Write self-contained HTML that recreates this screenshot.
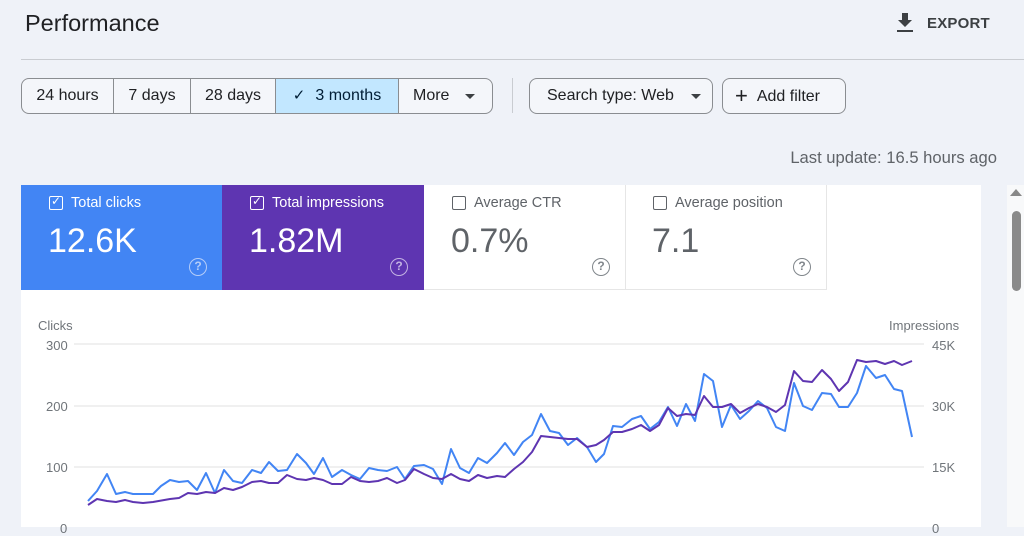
<!DOCTYPE html>
<html><head><meta charset="utf-8"><style>
*{margin:0;padding:0;box-sizing:border-box}
body{width:1024px;height:527px;overflow:hidden;background:#eff2f8;font-family:"Liberation Sans",Arial,sans-serif;position:relative;color:#3c4043}
.a{position:absolute}
.seg{position:absolute;top:78px;height:36px;border:1px solid #8a8d91;font-size:16px;color:#202124;line-height:34px;text-align:center;background:#f4f6fa}
.card{position:absolute;top:185px;height:105px;width:202px}
.lbl{position:absolute;left:28px;top:10px;font-size:14.5px;display:flex;align-items:center}
.cb{width:14px;height:14px;border:1.6px solid currentColor;border-radius:2px;margin-right:8px;position:relative}
.val{position:absolute;left:27px;top:37px;font-size:34px}
.q{position:absolute;left:168px;top:73px;width:18px;height:18px;border:1.5px solid currentColor;border-radius:50%;font-size:12px;text-align:center;line-height:15px;font-weight:bold}
.ax{position:absolute;font-size:13px;color:#70757a}
</style></head><body>
<div class="a" style="left:25px;top:10px;font-size:23.5px;color:#202124">Performance</div>
<svg class="a" style="left:896px;top:13px" width="18" height="20" viewBox="0 0 18 20"><path d="M6 0h6v7h4l-7 7-7-7h4z" fill="#3c4043"/><rect x="1" y="17" width="16" height="2" fill="#3c4043"/></svg>
<div class="a" style="left:927px;top:15px;font-size:15px;font-weight:bold;color:#3c4043;letter-spacing:.2px">EXPORT</div>
<div class="a" style="left:21px;top:59px;width:1003px;height:1px;background:#c9ccd1"></div>

<div class="seg" style="left:21px;width:93px;border-radius:8px 0 0 8px">24 hours</div>
<div class="seg" style="left:113px;width:78px">7 days</div>
<div class="seg" style="left:190px;width:86px">28 days</div>
<div class="seg" style="left:275px;width:124px;background:#c2e7ff;color:#001d35"><span style="font-size:15px;margin-right:10px">✓</span>3 months</div>
<div class="seg" style="left:398px;width:95px;border-radius:0 8px 8px 0;text-align:left;padding-left:14px">More<span style="position:absolute;left:66px;top:15px;border:5px solid transparent;border-top-color:#3c4043;border-bottom:0"></span></div>
<div class="a" style="left:512px;top:78px;width:1px;height:35px;background:#c9ccd1"></div>
<div class="seg" style="left:529px;width:184px;border-radius:8px;text-align:left;padding-left:17px">Search type: Web<span style="position:absolute;left:161px;top:15px;border:5px solid transparent;border-top-color:#3c4043;border-bottom:0"></span></div>
<div class="seg" style="left:722px;width:124px;border-radius:8px;text-align:left;padding-left:12px"><span style="font-size:22px;vertical-align:-2px;margin-right:9px">+</span>Add filter</div>
<div class="a" style="right:27px;top:148px;font-size:16.6px;color:#5f6368">Last update: 16.5 hours ago</div>

<div class="a" style="left:21px;top:185px;width:960px;height:342px;background:#fff"></div>
<div class="card" style="left:21px;background:#4285f4;color:#fff"><div class="lbl"><span class="cb"><span style="position:absolute;left:1px;top:-3px;font-size:12px">✓</span></span>Total clicks</div><div class="val">12.6K</div><div class="q" style="color:#b5cdf8">?</div></div>
<div class="card" style="left:222px;background:#5e35b1;color:#fff"><div class="lbl"><span class="cb"><span style="position:absolute;left:1px;top:-3px;font-size:12px">✓</span></span>Total impressions</div><div class="val">1.82M</div><div class="q" style="color:#c3b3e3">?</div></div>
<div class="card" style="left:424px;color:#5f6368;border-right:1px solid #e6e6e6;border-bottom:1px solid #e6e6e6"><div class="lbl"><span class="cb"></span>Average CTR</div><div class="val">0.7%</div><div class="q" style="color:#80868b">?</div></div>
<div class="card" style="left:625px;color:#5f6368;border-right:1px solid #e6e6e6;border-bottom:1px solid #e6e6e6"><div class="lbl"><span class="cb"></span>Average position</div><div class="val">7.1</div><div class="q" style="color:#80868b">?</div></div>

<div class="a" style="left:1007px;top:185px;width:17px;height:342px;background:#f8f9fa"></div>
<div class="a" style="left:1010px;top:189px;border:6px solid transparent;border-bottom:7px solid #888;border-top:0"></div>
<div class="a" style="left:1012px;top:211px;width:9px;height:80px;border-radius:5px;background:#8a8a8a"></div>

<div class="ax" style="left:38px;top:318px">Clicks</div>
<div class="ax" style="left:889px;top:318px">Impressions</div>
<div class="ax" style="left:46px;top:338px">300</div>
<div class="ax" style="left:46px;top:399px">200</div>
<div class="ax" style="left:46px;top:460px">100</div>
<div class="ax" style="left:60px;top:521px">0</div>
<div class="ax" style="left:932px;top:338px">45K</div>
<div class="ax" style="left:932px;top:399px">30K</div>
<div class="ax" style="left:932px;top:460px">15K</div>
<div class="ax" style="left:932px;top:521px">0</div>
<svg class="a" style="left:0;top:0" width="1024" height="527">
<g stroke="#ebebeb" stroke-width="1.5"><line x1="74" y1="344" x2="924" y2="344"/><line x1="74" y1="406" x2="924" y2="406"/><line x1="74" y1="467" x2="924" y2="467"/><line x1="74" y1="529" x2="924" y2="529"/></g>
<polyline fill="none" stroke="#4285f4" stroke-width="2" stroke-linejoin="round" points="88,501 97,491 107,474 116,494 125,492 133,494 143,494 153,494 161,486 170,480 179,482 188,481 197,490 206,473 215,493 224,470 233,481 242,483 252,470 261,473 269,462 278,471 287,470 297,454 306,463 314,474 323,458 332,477 342,470 351,475 360,479 369,468 378,470 387,471 397,467 405,479 414,466 424,465 433,469 442,484 451,449 460,468 469,473 478,458 487,463 497,453 505,443 514,455 523,442 532,435 541,414 550,431 559,433 568,445 577,438 587,447 596,462 604,454 613,426 622,427 632,419 641,416 650,429 659,422 668,407 677,426 686,404 695,421 704,374 713,381 722,427 731,405 740,419 749,411 758,401 767,408 776,427 785,431 794,383 803,406 812,410 822,393 831,394 839,407 848,407 857,393 866,366 876,378 885,375 894,389 902,391 912,437"/>
<polyline fill="none" stroke="#5e35b1" stroke-width="2" stroke-linejoin="round" points="88,505 97,499 107,501 116,502 125,500 133,502 143,503 153,502 170,499 179,498 188,493 197,494 206,492 215,493 224,488 233,490 242,487 252,482 261,481 269,483 278,483 287,475 297,479 306,480 314,478 323,480 332,484 342,484 351,477 360,481 369,482 378,481 387,478 397,483 405,480 414,469 424,474 433,478 442,479 451,474 460,479 469,481 478,475 487,478 497,476 505,477 514,469 523,462 532,452 541,436 550,437 559,438 568,439 577,439 587,447 596,445 604,440 613,432 622,432 632,429 641,425 650,431 659,425 668,408 677,416 686,414 695,415 704,396 713,407 722,407 731,404 740,413 749,408 758,404 767,407 776,412 785,405 794,371 803,381 812,382 822,370 831,379 839,391 848,382 857,360 866,362 876,361 885,364 894,361 902,365 912,361"/>
</svg>
</body></html>
